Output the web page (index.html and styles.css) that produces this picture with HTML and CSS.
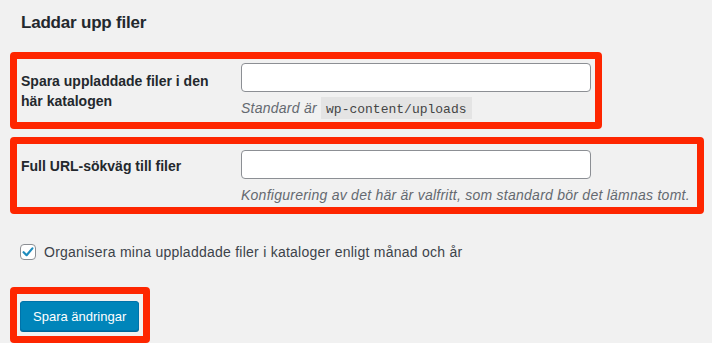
FILE: index.html
```html
<!DOCTYPE html>
<html lang="sv">
<head>
<meta charset="UTF-8">
<meta name="viewport" content="width=device-width, initial-scale=1.0">
<title>Mediainställningar</title>

<link rel="stylesheet" href="styles.css">
</head>

<body>

<div class="wrap">

<h2>Laddar upp filer</h2>

<!-- Upload path -->
<div class="mark mark-path">
<div class="row">
<label class="label label-path" for="uploadPath">Spara uppladdade filer i den här katalogen</label>
<div class="field">
<input type="text" id="uploadPath">
<p class="desc">Standard är <code>wp-content/uploads</code></p>
</div>
</div>
</div>

<!-- Upload URL -->
<div class="mark mark-url">
<div class="row">
<label class="label label-url" for="uploadUrl">Full URL-sökväg till filer</label>
<div class="field">
<input type="text" id="uploadUrl">
<p class="desc">Konfigurering av det här är valfritt, som standard bör det lämnas tomt.</p>
</div>
</div>
</div>

<label class="check">
<span class="box">
<svg width="14" height="14" viewBox="0 0 14 14"><path d="M2.6 7.2 L5.6 10.2 L11.4 3.4" fill="none" stroke="#1e8cbe" stroke-width="2.2" stroke-linecap="round" stroke-linejoin="round"/></svg>
</span>
Organisera mina uppladdade filer i kataloger enligt månad och år
</label>

<div class="mark mark-save">
<button type="submit">Spara ändringar</button>
</div>

</div>

</body>
</html>
```

FILE: styles.css
```css
body{
    font-family: "Liberation Sans", Arial, sans-serif;
    margin:0;
    background:#f1f1f1;
    color:#23282d;
}

.wrap{
    padding:0 10px;
}

h2{
    font-size:17px;
    font-weight:bold;
    line-height:20px;
    letter-spacing:-0.2px;
    margin:13px 0 19px 11px;
}

.mark{
    box-sizing:border-box;
    border:7px solid #fe2600;
    border-radius:4px;
}

.mark-path{
    width:592px;
    padding:4px 0 1px 4px;
}

.mark-url{
    width:694px;
    margin-top:8px;
    padding:6px 0 1px 4px;
}

.row{
    display:flex;
}

.label{
    box-sizing:border-box;
    width:220px;
    padding-right:20px;
    font-size:14px;
    font-weight:bold;
    line-height:20px;
}

.label-path{
    padding-top:8px;
}

.label-url{
    padding-top:6px;
}

input{
    box-sizing:border-box;
    display:block;
    width:350px;
    height:29px;
    margin:0;
    border:1px solid #8c8f94;
    border-radius:4px;
    background:#fff;
}

.desc{
    margin:5px 0 0;
    font-size:14px;
    font-style:italic;
    letter-spacing:0.25px;
    line-height:22px;
    color:#646970;
}

code{
    font-family: "Liberation Mono", monospace;
    font-size:13px;
    font-style:normal;
    letter-spacing:0;
    padding:5px 5px 2px;
    background:#e4e4e4;
    color:#444;
}

.check{
    display:flex;
    align-items:center;
    gap:8px;
    margin:28px 0 25px 10px;
    font-size:14px;
    letter-spacing:0.25px;
    line-height:20px;
    color:#3c434a;
}

.box{
    box-sizing:border-box;
    width:16px;
    height:16px;
    border:1px solid #8c8f94;
    border-radius:4px;
    background:#fff;
    display:flex;
    align-items:center;
    justify-content:center;
}

.mark-save{
    width:140px;
    padding:7px 4px 5px 3px;
}

button{
    height:30px;
    padding:0 12px;
    border:1px solid #0073aa;
    border-radius:3px;
    background:#0085ba;
    box-shadow:0 1px 0 #006799;
    color:#fff;
    font-family: "Liberation Sans", Arial, sans-serif;
    font-size:13px;
    white-space:nowrap;
    cursor:pointer;
}
```
